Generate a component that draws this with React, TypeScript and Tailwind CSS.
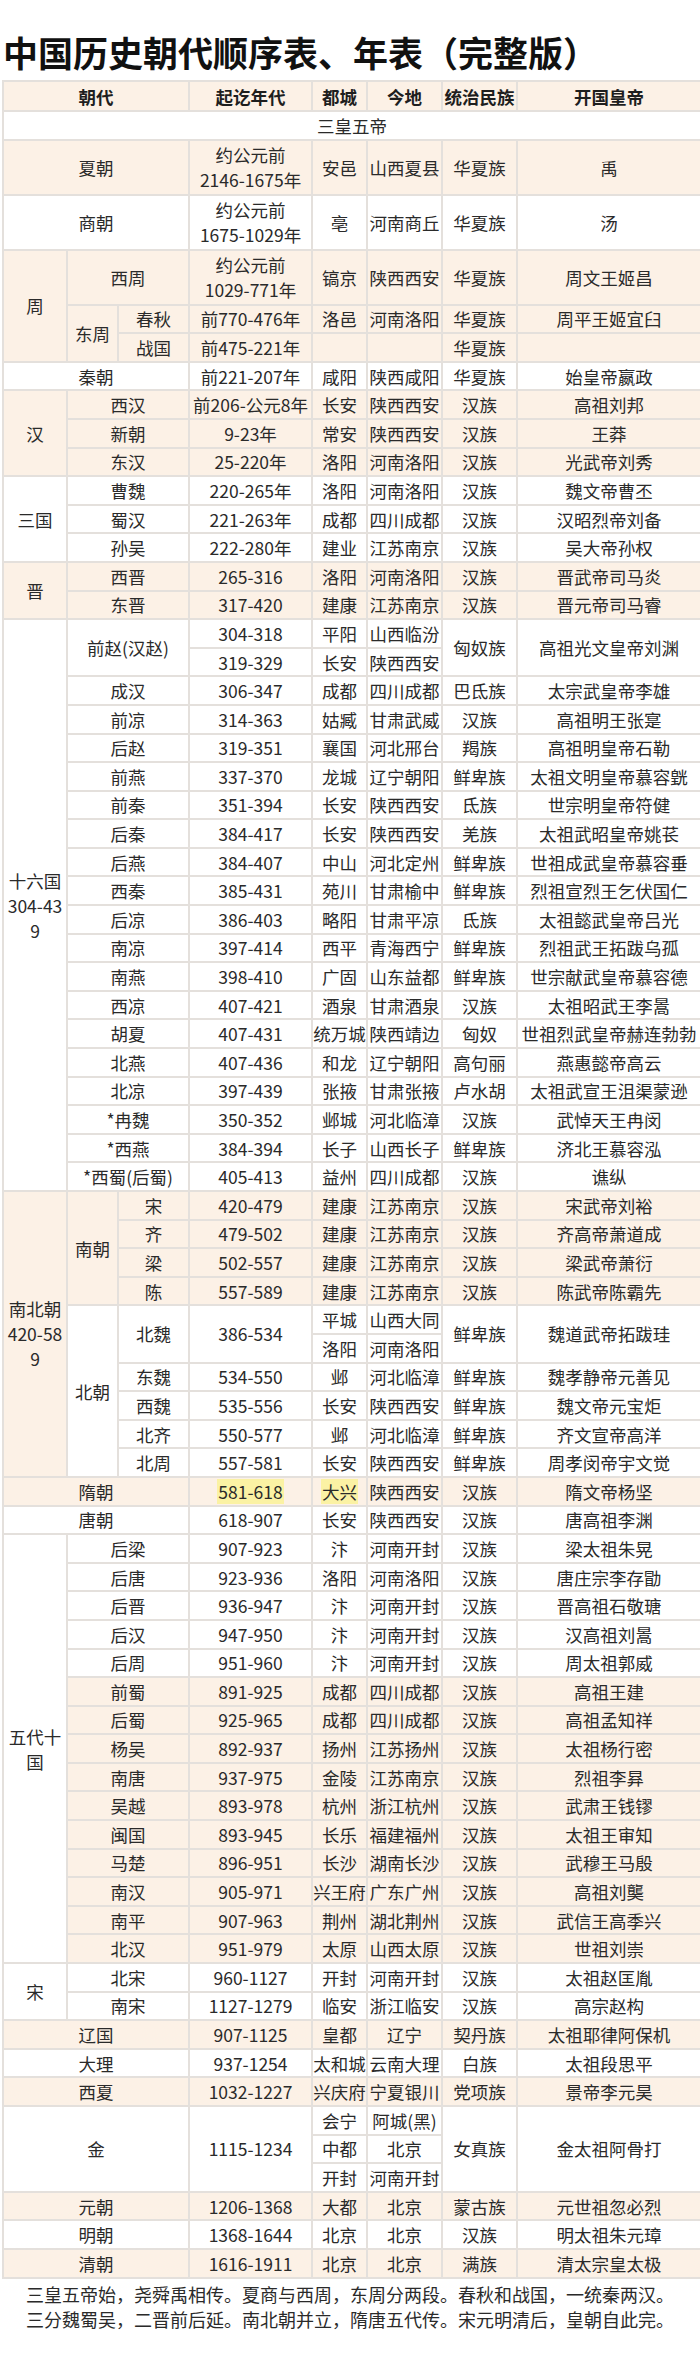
import type { ReactNode } from "react"

type Cell = ReactNode | [ReactNode, number?, number?]
type Row = { h: string; cream: boolean; head?: boolean; cells: Cell[] }

const U = "h-[28.6px]"
const TALL = "h-[55px]"

const r = (cream: boolean, cells: Cell[], h: string = U): Row => ({ h, cream, cells })

// simple row: name spanning the two sub columns
const sub = (cream: boolean, name: string, date: string, cap: string, loc: string, eth: string, founder: string) =>
  r(cream, [[name, 2], date, cap, loc, eth, founder])

const Mark = ({ children }: { children: ReactNode }) => (
  <span className="bg-[#fbf2a4] px-[1px]">{children}</span>
)

const rows: Row[] = [
  { h: "h-[30px]", cream: true, head: true, cells: [["朝代", 3], "起讫年代", "都城", "今地", "统治民族", "开国皇帝"] },
  r(false, [["三皇五帝", 8]]),
  r(true, [["夏朝", 3], <>约公元前<br />2146-1675年</>, "安邑", "山西夏县", "华夏族", "禹"], TALL),
  r(false, [["商朝", 3], <>约公元前<br />1675-1029年</>, "亳", "河南商丘", "华夏族", "汤"], TALL),
  r(true, [["周", 1, 3], ["西周", 2], <>约公元前<br />1029-771年</>, "镐京", "陕西西安", "华夏族", "周文王姬昌"], TALL),
  r(true, [["东周", 1, 2], "春秋", "前770-476年", "洛邑", "河南洛阳", "华夏族", "周平王姬宜臼"]),
  r(true, ["战国", "前475-221年", "", "", "华夏族", ""]),
  r(false, [["秦朝", 3], "前221-207年", "咸阳", "陕西咸阳", "华夏族", "始皇帝嬴政"]),
  r(true, [["汉", 1, 3], ["西汉", 2], "前206-公元8年", "长安", "陕西西安", "汉族", "高祖刘邦"]),
  sub(true, "新朝", "9-23年", "常安", "陕西西安", "汉族", "王莽"),
  sub(true, "东汉", "25-220年", "洛阳", "河南洛阳", "汉族", "光武帝刘秀"),
  r(false, [["三国", 1, 3], ["曹魏", 2], "220-265年", "洛阳", "河南洛阳", "汉族", "魏文帝曹丕"]),
  sub(false, "蜀汉", "221-263年", "成都", "四川成都", "汉族", "汉昭烈帝刘备"),
  sub(false, "孙吴", "222-280年", "建业", "江苏南京", "汉族", "吴大帝孙权"),
  r(true, [["晋", 1, 2], ["西晋", 2], "265-316", "洛阳", "河南洛阳", "汉族", "晋武帝司马炎"]),
  sub(true, "东晋", "317-420", "建康", "江苏南京", "汉族", "晋元帝司马睿"),
  r(false, [
    [<>十六国<br />304-43<br />9</>, 1, 20],
    ["前赵(汉赵)", 2, 2],
    "304-318", "平阳", "山西临汾",
    ["匈奴族", 1, 2],
    ["高祖光文皇帝刘渊", 1, 2],
  ]),
  r(false, ["319-329", "长安", "陕西西安"]),
  sub(false, "成汉", "306-347", "成都", "四川成都", "巴氐族", "太宗武皇帝李雄"),
  sub(false, "前凉", "314-363", "姑臧", "甘肃武威", "汉族", "高祖明王张寔"),
  sub(false, "后赵", "319-351", "襄国", "河北邢台", "羯族", "高祖明皇帝石勒"),
  sub(false, "前燕", "337-370", "龙城", "辽宁朝阳", "鲜卑族", "太祖文明皇帝慕容皝"),
  sub(false, "前秦", "351-394", "长安", "陕西西安", "氐族", "世宗明皇帝符健"),
  sub(false, "后秦", "384-417", "长安", "陕西西安", "羌族", "太祖武昭皇帝姚苌"),
  sub(false, "后燕", "384-407", "中山", "河北定州", "鲜卑族", "世祖成武皇帝慕容垂"),
  sub(false, "西秦", "385-431", "苑川", "甘肃榆中", "鲜卑族", "烈祖宣烈王乞伏国仁"),
  sub(false, "后凉", "386-403", "略阳", "甘肃平凉", "氐族", "太祖懿武皇帝吕光"),
  sub(false, "南凉", "397-414", "西平", "青海西宁", "鲜卑族", "烈祖武王拓跋乌孤"),
  sub(false, "南燕", "398-410", "广固", "山东益都", "鲜卑族", "世宗献武皇帝慕容德"),
  sub(false, "西凉", "407-421", "酒泉", "甘肃酒泉", "汉族", "太祖昭武王李暠"),
  sub(false, "胡夏", "407-431", "统万城", "陕西靖边", "匈奴", "世祖烈武皇帝赫连勃勃"),
  sub(false, "北燕", "407-436", "和龙", "辽宁朝阳", "高句丽", "燕惠懿帝高云"),
  sub(false, "北凉", "397-439", "张掖", "甘肃张掖", "卢水胡", "太祖武宣王沮渠蒙逊"),
  sub(false, "*冉魏", "350-352", "邺城", "河北临漳", "汉族", "武悼天王冉闵"),
  sub(false, "*西燕", "384-394", "长子", "山西长子", "鲜卑族", "济北王慕容泓"),
  sub(false, "*西蜀(后蜀)", "405-413", "益州", "四川成都", "汉族", "谯纵"),
  r(true, [
    [<>南北朝<br />420-58<br />9</>, 1, 10],
    ["南朝", 1, 4],
    "宋", "420-479", "建康", "江苏南京", "汉族", "宋武帝刘裕",
  ]),
  r(true, ["齐", "479-502", "建康", "江苏南京", "汉族", "齐高帝萧道成"]),
  r(true, ["梁", "502-557", "建康", "江苏南京", "汉族", "梁武帝萧衍"]),
  r(true, ["陈", "557-589", "建康", "江苏南京", "汉族", "陈武帝陈霸先"]),
  r(false, [
    ["北朝", 1, 6],
    ["北魏", 1, 2],
    ["386-534", 1, 2],
    "平城", "山西大同",
    ["鲜卑族", 1, 2],
    ["魏道武帝拓跋珪", 1, 2],
  ]),
  r(false, ["洛阳", "河南洛阳"]),
  r(false, ["东魏", "534-550", "邺", "河北临漳", "鲜卑族", "魏孝静帝元善见"]),
  r(false, ["西魏", "535-556", "长安", "陕西西安", "鲜卑族", "魏文帝元宝炬"]),
  r(false, ["北齐", "550-577", "邺", "河北临漳", "鲜卑族", "齐文宣帝高洋"]),
  r(false, ["北周", "557-581", "长安", "陕西西安", "鲜卑族", "周孝闵帝宇文觉"]),
  r(true, [["隋朝", 3], <Mark>581-618</Mark>, <Mark>大兴</Mark>, "陕西西安", "汉族", "隋文帝杨坚"]),
  r(false, [["唐朝", 3], "618-907", "长安", "陕西西安", "汉族", "唐高祖李渊"]),
  r(false, [[<>五代十<br />国</>, 1, 15], ["后梁", 2], "907-923", "汴", "河南开封", "汉族", "梁太祖朱晃"]),
  sub(false, "后唐", "923-936", "洛阳", "河南洛阳", "汉族", "唐庄宗李存勖"),
  sub(false, "后晋", "936-947", "汴", "河南开封", "汉族", "晋高祖石敬瑭"),
  sub(false, "后汉", "947-950", "汴", "河南开封", "汉族", "汉高祖刘暠"),
  sub(false, "后周", "951-960", "汴", "河南开封", "汉族", "周太祖郭威"),
  sub(true, "前蜀", "891-925", "成都", "四川成都", "汉族", "高祖王建"),
  sub(true, "后蜀", "925-965", "成都", "四川成都", "汉族", "高祖孟知祥"),
  sub(true, "杨吴", "892-937", "扬州", "江苏扬州", "汉族", "太祖杨行密"),
  sub(true, "南唐", "937-975", "金陵", "江苏南京", "汉族", "烈祖李昪"),
  sub(true, "吴越", "893-978", "杭州", "浙江杭州", "汉族", "武肃王钱镠"),
  sub(true, "闽国", "893-945", "长乐", "福建福州", "汉族", "太祖王审知"),
  sub(true, "马楚", "896-951", "长沙", "湖南长沙", "汉族", "武穆王马殷"),
  sub(true, "南汉", "905-971", "兴王府", "广东广州", "汉族", "高祖刘龑"),
  sub(true, "南平", "907-963", "荆州", "湖北荆州", "汉族", "武信王高季兴"),
  sub(true, "北汉", "951-979", "太原", "山西太原", "汉族", "世祖刘崇"),
  r(false, [["宋", 1, 2], ["北宋", 2], "960-1127", "开封", "河南开封", "汉族", "太祖赵匡胤"]),
  sub(false, "南宋", "1127-1279", "临安", "浙江临安", "汉族", "高宗赵构"),
  r(true, [["辽国", 3], "907-1125", "皇都", "辽宁", "契丹族", "太祖耶律阿保机"]),
  r(false, [["大理", 3], "937-1254", "太和城", "云南大理", "白族", "太祖段思平"]),
  r(true, [["西夏", 3], "1032-1227", "兴庆府", "宁夏银川", "党项族", "景帝李元昊"]),
  r(false, [
    ["金", 3, 3],
    ["1115-1234", 1, 3],
    "会宁", "阿城(黑)",
    ["女真族", 1, 3],
    ["金太祖阿骨打", 1, 3],
  ]),
  r(false, ["中都", "北京"]),
  r(false, ["开封", "河南开封"]),
  r(true, [["元朝", 3], "1206-1368", "大都", "北京", "蒙古族", "元世祖忽必烈"]),
  r(false, [["明朝", 3], "1368-1644", "北京", "北京", "汉族", "明太祖朱元璋"]),
  r(true, [["清朝", 3], "1616-1911", "北京", "北京", "满族", "清太宗皇太极"]),
]

const colWidths = ["w-[64px]", "w-[51px]", "w-[71px]", "w-[123px]", "w-[55px]", "w-[75px]", "w-[75px]", "w-[184px]"]

function renderCell(cell: Cell, key: number, row: Row) {
  let content: ReactNode = cell as ReactNode
  let colSpan = 1
  let rowSpan = 1
  if (Array.isArray(cell)) {
    content = cell[0]
    colSpan = cell[1] ?? 1
    rowSpan = cell[2] ?? 1
  }
  return (
    <td
      key={key}
      colSpan={colSpan}
      rowSpan={rowSpan}
      className={`border-2 border-[#e4e0dc] p-0 text-center align-middle whitespace-nowrap leading-[25px] ${
        row.cream ? "bg-[#fcf1e6]" : "bg-white"
      } ${row.head ? "font-bold text-[#1e1e1e]" : ""}`}
    >
      {content}
    </td>
  )
}

export default function App() {
  return (
    <div className="w-[700px] min-h-[2364px] bg-white font-['Noto_Sans_CJK_SC','Noto_Sans',sans-serif] text-[#2a2a2a]">
      {/* Title */}
      <h1 className="pt-[31px] pb-[7px] pl-[3px] text-[35px] leading-[42px] font-bold text-[#111] whitespace-nowrap">
        中国历史朝代顺序表、年表（完整版）
      </h1>

      {/* Table */}
      <div className="pl-[2px]">
        <table className="table-fixed w-[698px] border-collapse text-[17.5px]">
          <colgroup>
            {colWidths.map((w, i) => (
              <col key={i} className={w} />
            ))}
          </colgroup>
          <tbody>
            {rows.map((row, i) => (
              <tr key={i} className={row.h}>
                {row.cells.map((c, j) => renderCell(c, j, row))}
              </tr>
            ))}
          </tbody>
        </table>
      </div>

      {/* Mnemonic */}
      <div className="pt-[3px] text-center text-[18px] leading-[25px] text-[#2a2a2a]">
        <p>三皇五帝始，尧舜禹相传。夏商与西周，东周分两段。春秋和战国，一统秦两汉。</p>
        <p>三分魏蜀吴，二晋前后延。南北朝并立，隋唐五代传。宋元明清后，皇朝自此完。</p>
      </div>
    </div>
  )
}
